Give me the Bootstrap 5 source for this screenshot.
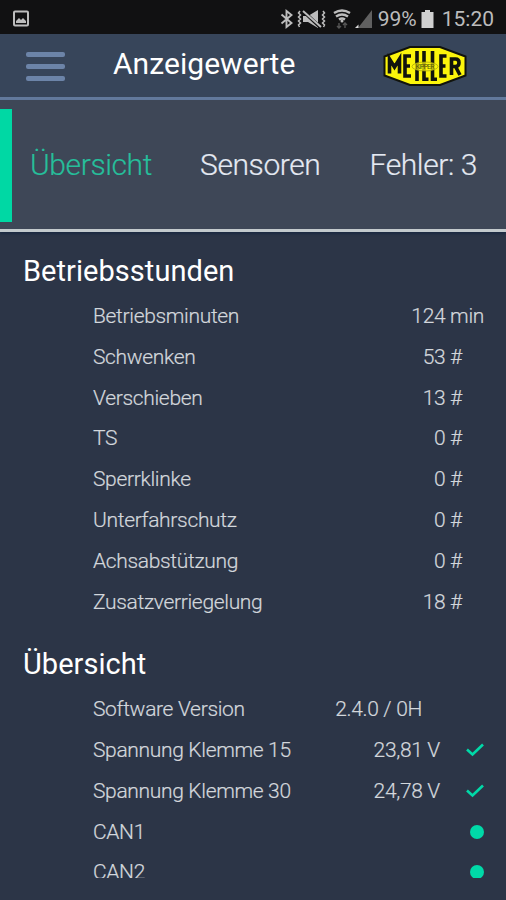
<!DOCTYPE html>
<html lang="de">
<head>
<meta charset="utf-8">
<meta name="viewport" content="width=device-width, initial-scale=1">
<title>Anzeigewerte</title>
<link rel="stylesheet" href="https://cdn.jsdelivr.net/npm/bootstrap@5.3.0/dist/css/bootstrap.min.css">
<style>
body{width:506px;height:900px;background:#2c3547;font-family:Roboto,"Liberation Sans",sans-serif;color:#d3d7dc}
.statusbar{height:34px;background:#111112;color:#bcbcbc;padding:3px 12px 0 12px;font-size:21px;line-height:32px}
.appbar{height:66px;background:#37455a;border-bottom:3px solid #62799c;padding-left:26px;padding-right:39px}
.burger{width:39px;height:29px;margin-top:2px;color:#6c84a8}
.burger i{display:block;height:5px;border-radius:2px;background:currentColor}
.screen-title{font-size:30px;font-weight:400;line-height:36px;letter-spacing:.05px;color:#fff;margin-left:48px;width:184px;padding-bottom:4px}
.tabstrip{height:132px;background:#3e4757;border-bottom:3px solid #c3cacd;box-shadow:0 2px 2px #1c2b43;padding-top:9px}
.tab-marker{width:12px;height:113px;background:#00d8a4}
.tab-link{font-size:30px;font-weight:300;line-height:40px;height:112px;letter-spacing:-.4px;color:#e4e9f2;white-space:nowrap;-webkit-text-stroke:.2px}
.tab-link.active{color:#26bf9b;width:170px;margin-left:18px}
.tab-mid{width:169.500px}
.scroller{height:646px;padding-left:23px;padding-top:21px;overflow:hidden}
.group-title{font-size:29px;font-weight:400;line-height:36px;letter-spacing:.05px;color:#fff;margin:0;height:43px}
.group-next{padding-top:24px}
.entries{padding-left:70px}
.entry{height:40.8px;font-size:21px;font-weight:300;line-height:40px;letter-spacing:-.33px;white-space:nowrap;-webkit-text-stroke:.2px}
.group-next .entries{margin-top:-.5px}
.val{padding-right:44px}
.val-min{padding-right:22px}
.val-ver{padding-right:84px}
.tick{width:18px;height:14px;margin-left:26px;margin-right:22px}
.dot{width:14px;height:14px;background:#00d9a8;margin-right:22px}
</style>
<script src="https://cdn.jsdelivr.net/npm/bootstrap@5.3.0/dist/js/bootstrap.bundle.min.js"></script>
</head>
<body class="overflow-hidden">
<header class="statusbar d-flex align-items-center justify-content-between">
  <svg width="18" height="18" viewBox="0 0 18 18"><rect x="2" y="1.500" width="14" height="14" rx="1" fill="none" stroke="#bdbdbd" stroke-width="2"/><path d="M4 13V11l3-3 2 2 2-2 3 3v2z" fill="#bdbdbd"/></svg>
  <div class="d-flex align-items-center">
    <svg width="98" height="24" viewBox="275 6 98 24" fill="none" stroke="#bdbdbd" stroke-width="1.900">
      <path d="M280.500 13.500l10 8.500-5 4V10l5 4-10 8.500"/>
      <path d="M299 10l-1.500 2 2 2-2 2 2 2-2 2 2 2-2 2 1 2M322 10l1.500 2-2 2 2 2-2 2 2 2-2 2 2 2-1 2" stroke-width="1.500"/>
      <path d="M302 15h5l10-6v18l-10-6h-5z" fill="#bdbdbd" stroke="none"/><path d="M302 10l17 16" stroke="#111112" stroke-width="3.500"/><path d="M302 10l18 16"/>
      <path d="M333 12q8-5 16 0M335 15.500q6-4 12 0M338 18.500q3-2 6 0" stroke-width="2.400"/><circle cx="341" cy="20" r="1.500" fill="#bdbdbd" stroke="none"/>
      <path d="M338 22v5m-2-2l2 2 2-2M344 27v-5m-2 2l2-2 2 2" stroke="#555" stroke-width="1.400"/>
      <path d="M371 9v18h-14z" fill="#606060" stroke="none"/><path d="M354 27l3.500-3.500V27z" fill="#ddd" stroke="none"/>
    </svg>
    <span class="ms-1 pct">99%</span>
    <svg class="ms-1" width="13" height="20" viewBox="0 0 13 20"><path d="M4 1h5v2h3.500v16H.5V3H4z" fill="#d0d0d0"/></svg>
    <span class="ms-2">15:20</span>
  </div>
</header>

<nav class="appbar d-flex align-items-center">
  <div class="burger d-flex flex-column justify-content-between"><i></i><i></i><i></i></div>
  <h1 class="screen-title mb-0 text-nowrap">Anzeigewerte</h1>
  <svg class="ms-auto" width="84" height="42" viewBox="0 0 84 42">
    <path d="M1.500 11.500L27 2h30l25.500 9.500v19L57 40H27L1.500 30.500z" fill="#fcf50b" stroke="#11130d" stroke-width="2"/>
    <g fill="none" stroke="#11130d" stroke-width="3.600">
      <path d="M6.500 28.500V14l5 8 5-8v14.500M28 11h-6v20h6M22 21h5M34 6v30M41 6v28.300h4.500M49.500 6v28.300H54M63.500 11h-5.500v20h5.500M58 21h4.500M68.500 30V14h4q3.500 0 3.500 3.700t-3.500 3.800h-4m4 0l4.500 8.500"/>
    </g>
    <ellipse cx="42" cy="21.500" rx="13" ry="4.500" fill="#fcf50b" fill-opacity=".72" stroke="#a39f10" stroke-width=".7"/>
    <text x="42" y="24" text-anchor="middle" font-size="7" font-weight="400" textLength="19" fill="#55530c">KIPPER</text>
  </svg>
</nav>

<div class="tabstrip d-flex">
  <div class="tab-marker"></div>
  <div class="tab-link active d-flex align-items-center"><span>Übersicht</span></div>
  <div class="tab-link tab-mid d-flex align-items-center"><span>Sensoren</span></div>
  <div class="tab-link d-flex align-items-center"><span>Fehler: 3</span></div>
</div>

<main class="scroller">
  <section>
    <h2 class="group-title">Betriebsstunden</h2>
    <div class="entries">
      <div class="entry d-flex justify-content-between"><span>Betriebsminuten</span><span class="val-min">124 min</span></div>
      <div class="entry d-flex justify-content-between"><span>Schwenken</span><span class="val">53 #</span></div>
      <div class="entry d-flex justify-content-between"><span>Verschieben</span><span class="val">13 #</span></div>
      <div class="entry d-flex justify-content-between"><span>TS</span><span class="val">0 #</span></div>
      <div class="entry d-flex justify-content-between"><span>Sperrklinke</span><span class="val">0 #</span></div>
      <div class="entry d-flex justify-content-between"><span>Unterfahrschutz</span><span class="val">0 #</span></div>
      <div class="entry d-flex justify-content-between"><span>Achsabstützung</span><span class="val">0 #</span></div>
      <div class="entry d-flex justify-content-between"><span>Zusatzverriegelung</span><span class="val">18 #</span></div>
    </div>
  </section>
  <section class="group-next">
    <h2 class="group-title">Übersicht</h2>
    <div class="entries">
      <div class="entry d-flex justify-content-between"><span>Software Version</span><span class="val-ver">2.4.0 / 0H</span></div>
      <div class="entry d-flex align-items-center"><span>Spannung Klemme 15</span><span class="ms-auto">23,81 V</span><svg class="tick" viewBox="0 0 18 14"><path d="M1 6.500l5.500 5L17 1.500" fill="none" stroke="#00d9a8" stroke-width="2.600"/></svg></div>
      <div class="entry d-flex align-items-center"><span>Spannung Klemme 30</span><span class="ms-auto">24,78 V</span><svg class="tick" viewBox="0 0 18 14"><path d="M1 6.500l5.500 5L17 1.500" fill="none" stroke="#00d9a8" stroke-width="2.600"/></svg></div>
      <div class="entry d-flex align-items-center justify-content-between"><span>CAN1</span><span class="dot rounded-circle"></span></div>
      <div class="entry d-flex align-items-center justify-content-between"><span>CAN2</span><span class="dot rounded-circle"></span></div>
    </div>
  </section>
</main>
</body>
</html>
